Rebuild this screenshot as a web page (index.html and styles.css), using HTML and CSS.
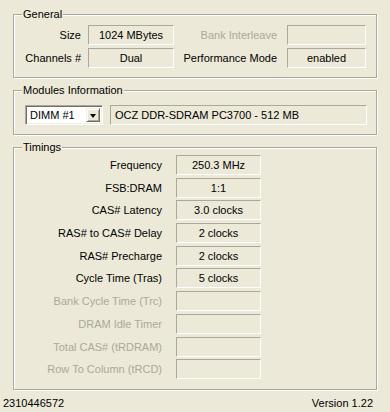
FILE: index.html
```html
<!DOCTYPE html>
<html lang="en">
<head>
    <meta charset="UTF-8">
    <meta name="viewport" content="width=device-width, initial-scale=1.0">
    <title>CPU-Z - Memory</title>
    <link rel="stylesheet" href="styles.css">
</head>
<body>
    <div class="window">
        <section class="group general">
            <span class="group-title">General</span>
            <div class="general-grid">
                <span class="label">Size</span>
                <span class="value">1024 MBytes</span>
                <span class="label label-wide disabled">Bank Interleave</span>
                <span class="value"></span>

                <span class="label">Channels #</span>
                <span class="value">Dual</span>
                <span class="label label-wide">Performance Mode</span>
                <span class="value">enabled</span>
            </div>
        </section>

        <section class="group modules">
            <span class="group-title">Modules Information</span>
            <div class="modules-row">
                <div class="combo">
                    <span class="combo-text">DIMM #1</span>
                    <span class="combo-btn"><span class="arrow"></span></span>
                </div>
                <span class="value value-left module-name">OCZ DDR-SDRAM PC3700 - 512 MB</span>
            </div>
        </section>

        <section class="group timings">
            <span class="group-title">Timings</span>
            <div class="timings-grid">
                <span class="label">Frequency</span>
                <span class="value">250.3 MHz</span>
                <span class="label">FSB:DRAM</span>
                <span class="value">1:1</span>
                <span class="label">CAS# Latency</span>
                <span class="value">3.0 clocks</span>
                <span class="label">RAS# to CAS# Delay</span>
                <span class="value">2 clocks</span>
                <span class="label">RAS# Precharge</span>
                <span class="value">2 clocks</span>
                <span class="label">Cycle Time (Tras)</span>
                <span class="value">5 clocks</span>
                <span class="label disabled">Bank Cycle Time (Trc)</span>
                <span class="value"></span>
                <span class="label disabled">DRAM Idle Timer</span>
                <span class="value"></span>
                <span class="label disabled">Total CAS# (tRDRAM)</span>
                <span class="value"></span>
                <span class="label disabled">Row To Column (tRCD)</span>
                <span class="value"></span>
            </div>
        </section>

        <footer class="status">
            <span>2310446572</span>
            <span>Version 1.22</span>
        </footer>
    </div>
</body>
</html>
```

FILE: styles.css
```css
:root {
    --face: #ECE9D8;
    --shadow: #ACA899;
    --dark: #716F64;
    --light: #F1EFE2;
    --disabled: #ACA899;
}

body {
    margin: 0;
    background: var(--face);
    font-family: 'Liberation Sans', Arial, sans-serif;
    font-size: 11px;
    color: #000;
}

.window {
    width: 390px;
    height: 412px;
    padding-top: 14px;
    box-sizing: border-box;
}

.group {
    position: relative;
    margin: 0 13px;
    border: 1px solid var(--shadow);
    box-shadow: inset 1px 1px 0 #fff, 1px 1px 0 #fff;
}

.group + .group {
    margin-top: 12px;
}

.group-title {
    position: absolute;
    top: -7px;
    left: 8px;
    padding: 0 1px;
    line-height: 13px;
    background: var(--face);
}

.label {
    text-align: right;
    padding-right: 7px;
    white-space: nowrap;
}

.label-wide {
    padding-right: 10px;
}

.disabled {
    color: var(--disabled);
}

.value {
    height: 20px;
    box-sizing: border-box;
    border-top: 1px solid var(--shadow);
    border-left: 1px solid var(--shadow);
    border-right: 1px solid #fff;
    border-bottom: 1px solid #fff;
    line-height: 18px;
    text-align: center;
    white-space: nowrap;
}

.value-left {
    text-align: left;
    padding-left: 4px;
}

/* General */
.general {
    padding: 10px 0 9px;
}

.general-grid {
    display: grid;
    grid-template-columns: 74px 86px 113px 79px;
    row-gap: 3px;
    align-items: center;
}

/* Modules Information */
.modules {
    padding: 14px 0 9px 11px;
}

.modules-row {
    display: flex;
    gap: 7px;
}

.combo {
    width: 78px;
    height: 20px;
    box-sizing: border-box;
    display: flex;
    align-items: center;
    justify-content: space-between;
    background: #fff;
    border-top: 1px solid var(--shadow);
    border-left: 1px solid var(--shadow);
    border-right: 1px solid #fff;
    border-bottom: 1px solid #fff;
    box-shadow: inset 1px 1px 0 var(--dark), inset -1px -1px 0 var(--light);
    padding: 2px;
}

.combo-text {
    padding-left: 2px;
    line-height: 14px;
}

.combo-btn {
    width: 14px;
    height: 14px;
    box-sizing: border-box;
    display: flex;
    align-items: center;
    justify-content: center;
    background: var(--face);
    border-top: 1px solid var(--light);
    border-left: 1px solid var(--light);
    border-right: 1px solid var(--dark);
    border-bottom: 1px solid var(--dark);
    box-shadow: inset 1px 1px 0 #fff, inset -1px -1px 0 var(--shadow);
}

.arrow {
    width: 0;
    height: 0;
    border-left: 3.5px solid transparent;
    border-right: 3.5px solid transparent;
    border-top: 4px solid #000;
    margin-top: 1px;
}

.module-name {
    width: 257px;
}

/* Timings */
.timings {
    padding: 7px 0 10px;
}

.timings-grid {
    display: grid;
    grid-template-columns: 162px 85px;
    grid-auto-rows: 20px;
    row-gap: 2.7px;
    align-items: center;
}

.timings .label {
    padding-right: 14px;
}

/* Status line */
.status {
    display: flex;
    justify-content: space-between;
    margin-top: 7px;
    padding: 0 17px 0 3px;
    line-height: 13px;
}
```
